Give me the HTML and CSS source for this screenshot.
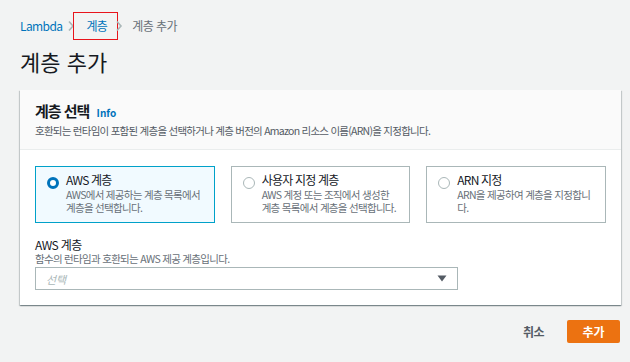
FILE: index.html
```html
<!DOCTYPE html>
<html lang="ko">
<head>
<meta charset="utf-8">
<title>계층 추가</title>
<link rel="stylesheet" href="styles.css">
</head>
<body>
<div class="page">
  <nav class="crumbs">
    <a class="crumb-link">Lambda</a>
    <svg class="sep" width="8" height="12" viewBox="0 0 8 12"><path d="M2 1.5 L6 6 L2 10.5" fill="none" stroke="#aab7b8" stroke-width="1.6"/></svg>
    <span class="crumb-mark"><a class="crumb-link">계층</a></span>
    <svg class="sep sep-after" width="8" height="12" viewBox="0 0 8 12"><path d="M2 1.5 L6 6 L2 10.5" fill="none" stroke="#aab7b8" stroke-width="1.6"/></svg>
    <span class="crumb-current">계층 추가</span>
  </nav>
  <h1 class="title">계층 추가</h1>
  <section class="card">
    <header class="card-head">
      <h2 class="card-title">계층 선택 <a class="info">Info</a></h2>
      <p class="card-desc">호환되는 런타임이 포함된 계층을 선택하거나 계층 버전의 Amazon 리소스 이름(ARN)을 지정합니다.</p>
    </header>
    <div class="card-body">
      <div class="tiles">
        <div class="tile selected">
          <span class="radio checked"></span>
          <div class="tile-text">
            <div class="tile-title">AWS 계층</div>
            <div class="tile-desc">AWS에서 제공하는 계층 목록에서<br>계층을 선택합니다.</div>
          </div>
        </div>
        <div class="tile">
          <span class="radio"></span>
          <div class="tile-text">
            <div class="tile-title">사용자 지정 계층</div>
            <div class="tile-desc">AWS 계정 또는 조직에서 생성한<br>계층 목록에서 계층을 선택합니다.</div>
          </div>
        </div>
        <div class="tile">
          <span class="radio"></span>
          <div class="tile-text">
            <div class="tile-title">ARN 지정</div>
            <div class="tile-desc">ARN을 제공하여 계층을 지정합니<br>다.</div>
          </div>
        </div>
      </div>
      <div class="field">
        <div class="field-label">AWS 계층</div>
        <div class="field-desc">함수의 런타임과 호환되는 AWS 제공 계층입니다.</div>
        <div class="select">
          <span class="placeholder">선택</span>
          <svg class="caret" width="10" height="7" viewBox="0 0 10 7"><path d="M0.5 0.5 H9.5 L5 6.5 Z" fill="#545b64"/></svg>
        </div>
      </div>
    </div>
  </section>
  <div class="actions">
    <button class="btn-cancel">취소</button>
    <button class="btn-primary">추가</button>
  </div>
</div>
</body>
</html>
```

FILE: styles.css
```css
* { box-sizing: border-box; }
html, body { margin: 0; padding: 0; }
body {
  background: #f2f3f3;
  font-family: "Noto Sans CJK KR", "Noto Sans", sans-serif;
  color: #16191f;
}
.page {
  padding: 12px 9px 0 20px;
}
.crumbs {
  display: flex;
  align-items: center;
  height: 28px;
  font-size: 12px;
  line-height: 14px;
  letter-spacing: -0.6px;
}
.crumb-link {
  color: #0073bb;
  text-decoration: none;
}
.sep {
  flex: none;
  margin: 0 0 0 5px;
}
.crumb-mark {
  display: inline-flex;
  align-items: center;
  height: 28px;
  padding: 0 10px 0 12px;
  margin-left: -2px;
  border: 1px solid #e8141b;
}
.sep-after {
  margin: 0 9px 0 -3px;
}
.crumb-current {
  color: #687078;
}
.title {
  margin: 6px 0 14px;
  font-size: 22px;
  line-height: 30px;
  font-weight: 400;
}
.card {
  background: #fff;
  box-shadow: 0 1px 1px 0 rgba(0,28,36,.3), 1px 1px 1px 0 rgba(0,28,36,.15), -1px 1px 1px 0 rgba(0,28,36,.15);
}
.card-head {
  background: #fafafa;
  border-bottom: 1px solid #eaeded;
  padding: 11px 15px 11px;
}
.card-title {
  margin: 0;
  font-size: 15px;
  line-height: 20px;
  font-weight: 700;
  letter-spacing: -1px;
}
.info {
  font-size: 10px;
  font-weight: 700;
  letter-spacing: 0;
  color: #0073bb;
  margin-left: 4px;
}
.card-desc {
  margin: 1px 0 0;
  font-size: 10.5px;
  line-height: 14px;
  letter-spacing: -0.75px;
  color: #545b64;
}
.card-body {
  padding: 16px 15px 15px;
}
.tiles {
  display: grid;
  grid-template-columns: repeat(3, 1fr);
  gap: 16px;
}
.tile {
  display: flex;
  align-items: flex-start;
  gap: 7px;
  height: 57px;
  padding: 5px 11px;
  border: 1px solid #aab7b8;
}
.tile.selected {
  border-color: #00a1c9;
  background: #f1faff;
}
.radio {
  flex: none;
  width: 12px;
  height: 12px;
  margin-top: 5px;
  border-radius: 50%;
  border: 1px solid #aab7b8;
  background: #fff;
}
.radio.checked {
  border: 3.5px solid #0073bb;
}
.tile-text {
  white-space: nowrap;
}
.tile-title {
  font-size: 12px;
  line-height: 16px;
  letter-spacing: -0.8px;
}
.tile-desc {
  font-size: 10.5px;
  line-height: 13px;
  letter-spacing: -0.7px;
  color: #687078;
}
.field {
  margin-top: 14px;
}
.field-label {
  font-size: 12px;
  line-height: 15px;
  letter-spacing: -0.6px;
}
.field-desc {
  font-size: 10.5px;
  line-height: 13px;
  letter-spacing: -0.7px;
  color: #687078;
}
.select {
  display: flex;
  align-items: center;
  justify-content: space-between;
  width: 423px;
  height: 23px;
  margin-top: 2px;
  padding: 0 10px 0 10px;
  border: 1px solid #aab7b8;
  background: #fff;
}
.placeholder {
  font-size: 11px;
  font-style: italic;
  color: #aab7b8;
}
.actions {
  display: flex;
  justify-content: flex-end;
  align-items: center;
  gap: 23px;
  margin-top: 15px;
  padding-right: 1px;
}
.btn-cancel {
  border: 0;
  background: none;
  padding: 0;
  font-family: inherit;
  font-size: 12px;
  font-weight: 700;
  letter-spacing: -0.5px;
  color: #545b64;
}
.btn-primary {
  width: 53px;
  height: 23px;
  border: 0;
  border-radius: 2px;
  background: #ec7211;
  color: #fff;
  font-family: inherit;
  font-size: 12px;
  font-weight: 700;
}
```
